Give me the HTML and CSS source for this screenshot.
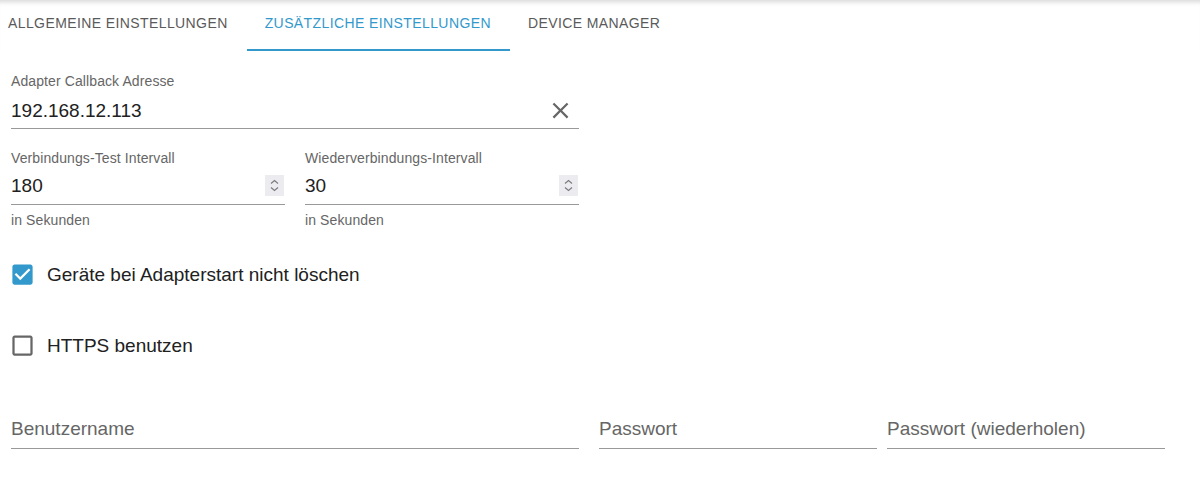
FILE: index.html
```html
<!DOCTYPE html>
<html lang="de">
<head>
<meta charset="utf-8">
<title>Einstellungen</title>
<link rel="stylesheet" href="styles.css">
</head>
<body>
<div class="tabs">
  <div class="tab">Allgemeine Einstellungen</div>
  <div class="tab active">Zusätzliche Einstellungen</div>
  <div class="tab">Device Manager</div>
</div>
<div class="content">
  <div class="field field-wide">
    <span class="label">Adapter Callback Adresse</span>
    <div class="input">
      <span class="value">192.168.12.113</span>
      <svg class="clear" viewBox="0 0 24 24" width="27" height="27"><path d="M19 6.41 17.59 5 12 10.59 6.41 5 5 6.41 10.59 12 5 17.59 6.41 19 12 13.41 17.59 19 19 17.59 13.41 12z" fill="#666"/></svg>
    </div>
  </div>

  <div class="row-pair">
    <div class="field field-half">
      <span class="label">Verbindungs-Test Intervall</span>
      <div class="input">
        <span class="value">180</span>
        <span class="spin"><svg viewBox="0 0 19 21" width="19" height="21"><path d="M6 8.5 9.5 5.5 13 8.5M6 12.5 9.5 15.5 13 12.5" fill="none" stroke="#7a7a7a" stroke-width="1.1"/></svg></span>
      </div>
      <span class="helper">in Sekunden</span>
    </div>
    <div class="field field-half">
      <span class="label">Wiederverbindungs-Intervall</span>
      <div class="input">
        <span class="value">30</span>
        <span class="spin"><svg viewBox="0 0 19 21" width="19" height="21"><path d="M6 8.5 9.5 5.5 13 8.5M6 12.5 9.5 15.5 13 12.5" fill="none" stroke="#7a7a7a" stroke-width="1.1"/></svg></span>
      </div>
      <span class="helper">in Sekunden</span>
    </div>
  </div>

  <div class="check check-first">
    <svg class="box" viewBox="0 0 24 24" width="27" height="27"><path d="M19 3H5c-1.11 0-2 .9-2 2v14c0 1.1.89 2 2 2h14c1.11 0 2-.9 2-2V5c0-1.1-.89-2-2-2zm-9 14l-5-5 1.41-1.41L10 14.17l7.59-7.59L19 8l-9 9z" fill="#3399cc"/></svg>
    <span class="check-label">Geräte bei Adapterstart nicht löschen</span>
  </div>

  <div class="check check-second">
    <svg class="box" viewBox="0 0 24 24" width="27" height="27"><path d="M19 5v14H5V5h14m0-2H5c-1.1 0-2 .9-2 2v14c0 1.1.9 2 2 2h14c1.1 0 2-.9 2-2V5c0-1.1-.9-2-2-2z" fill="#666"/></svg>
    <span class="check-label">HTTPS benutzen</span>
  </div>

  <div class="row-login">
    <div class="field field-user">
      <div class="input"><span class="placeholder">Benutzername</span></div>
    </div>
    <div class="field field-pass">
      <div class="input"><span class="placeholder">Passwort</span></div>
    </div>
    <div class="field field-pass2">
      <div class="input"><span class="placeholder">Passwort (wiederholen)</span></div>
    </div>
  </div>
</div>
</body>
</html>
```

FILE: styles.css
```css
* { box-sizing: border-box; }

html, body {
  margin: 0;
  padding: 0;
  background: #fff;
  font-family: "Liberation Sans", Arial, sans-serif;
}

.tabs {
  display: flex;
  height: 51px;
  box-shadow: inset 0 6px 5px -4px rgba(0, 0, 0, 0.16);
}

.tab {
  height: 51px;
  padding: 15px 19px 0 18px;
  font-size: 14px;
  line-height: 16px;
  letter-spacing: 0.4px;
  text-transform: uppercase;
  color: #5a5a5a;
  white-space: nowrap;
}

.tab:first-child { padding-left: 8px; }

.tab.active {
  color: #3399cc;
  border-bottom: 2px solid #3399cc;
}

.content {
  padding-left: 11px;
}

.field { display: flex; flex-direction: column; }

.field-wide { width: 568px; margin-top: 22px; }

.label {
  display: block;
  font-size: 14px;
  line-height: 16px;
  letter-spacing: 0.1px;
  color: #666;
}

.input {
  display: flex;
  align-items: center;
  margin-top: 5px;
  padding: 4px 0 5px;
  border-bottom: 1px solid #999;
}

.field-wide .input {
  margin-top: 7px;
  padding: 3px 0 6px;
}

.field-half .input {
  margin-top: 6px;
  padding: 2px 0 7px;
}

.value {
  flex: 1;
  font-size: 19px;
  line-height: 23px;
  color: #212121;
}

.placeholder {
  flex: 1;
  font-size: 19px;
  line-height: 23px;
  color: #666;
}

.clear {
  display: block;
  margin: -2px 5px -2px 0;
}

.row-pair {
  display: flex;
  gap: 20px;
  margin-top: 21px;
}

.field-half { width: 274px; }

.spin {
  display: block;
  width: 19px;
  height: 21px;
  background: #ebebf0;
  margin-right: 1px;
}

.spin svg { display: block; }

.helper {
  display: block;
  margin-top: 7px;
  font-size: 14px;
  line-height: 16px;
  letter-spacing: 0.1px;
  color: #666;
}

.check {
  display: flex;
  align-items: center;
  height: 42px;
}

.check-first { margin-top: 25px; }
.check-second { margin-top: 29px; }

.box {
  display: block;
  margin-left: -2px;
}

.check-label {
  margin-left: 11px;
  font-size: 19px;
  line-height: 23px;
  color: #212121;
}

.row-login {
  display: flex;
  margin-top: 47px;
}

.row-login .input {
  margin-top: 0;
  padding-bottom: 8px;
}

.field-user { width: 568px; }
.field-pass { width: 278px; margin-left: 20px; }
.field-pass2 { width: 278px; margin-left: 10px; }
```
